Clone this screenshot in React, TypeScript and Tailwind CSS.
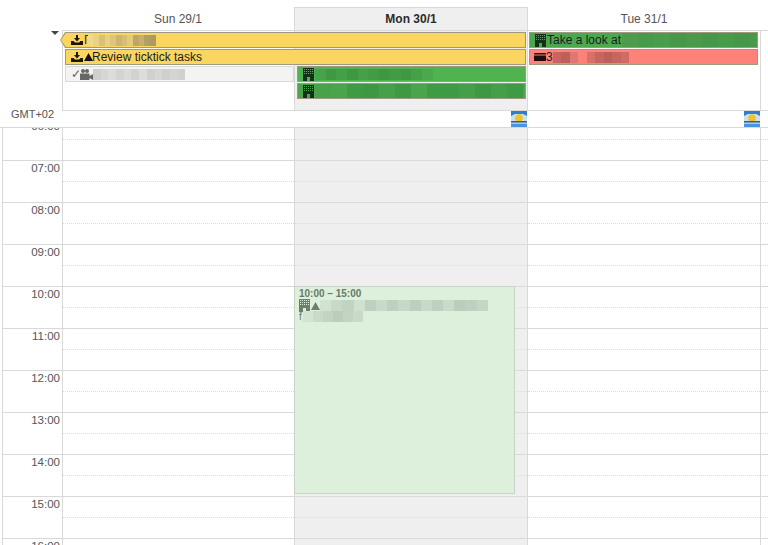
const HOURS = ["06:00", "07:00", "08:00", "09:00", "10:00", "11:00", "12:00", "13:00", "14:00", "15:00", "16:00"];

function TrayIcon() {
  return (
    <svg width="12" height="10" viewBox="0 0 12 10" className="shrink-0" fill="#1c1608">
      <path d="M5 0h2v3h2L6 6.500 3 3h2z" />
      <path d="M0 6h2.500L4 7.500h4L9.500 6H12v4H0z" />
    </svg>
  );
}

function BuildingIcon({ color = "#12301a" }: { color?: string }) {
  return (
    <svg width="11" height="13" viewBox="0 0 11 13" className="shrink-0" fill={color}>
      <path
        d="M0 0h11v9H0zM1 1v1h1V1zm2 0v1h1V1zm2 0v1h1V1zm2 0v1h1V1zm2 0v1h1V1zM1 3v1h1V3zm2 0v1h1V3zm2 0v1h1V3zm2 0v1h1V3zm2 0v1h1V3zM1 5v1h1V5zm2 0v1h1V5zm2 0v1h1V5zm2 0v1h1V5zm2 0v1h1V5z"
        fillRule="evenodd"
      />
      <path d="M0 7h11v2H0zM0 9h4v4H0zM7 9h4v4H7z" />
    </svg>
  );
}

function Triangle({ color = "#111" }: { color?: string }) {
  return (
    <svg width="9" height="8" viewBox="0 0 9 8" className="shrink-0" fill={color}>
      <path d="M4.500 0 9 8H0z" />
    </svg>
  );
}

function CameraIcon() {
  return (
    <svg width="13" height="11" viewBox="0 0 13 11" className="shrink-0" fill="#666">
      <circle cx="3" cy="2" r="2" />
      <circle cx="7" cy="2" r="2" />
      <path d="M0 4.500h9.500V11H0zM9.500 7 13 5v6L9.500 9z" />
    </svg>
  );
}

function CardIcon() {
  return (
    <svg width="12" height="8" viewBox="0 0 12 8" className="shrink-0" fill="#1c0d0d">
      <path d="M1 0h10a1 1 0 0 1 1 1v.5H0V1a1 1 0 0 1 1-1zM0 2.500h12V8H0z" />
    </svg>
  );
}

function SunIcon() {
  return (
    <svg width="16" height="16" viewBox="0 0 16 16" className="shrink-0">
      <rect width="16" height="16" fill="#2f7fd0" />
      <path d="M0 5 4 3h8l4 2v5H0z" fill="#cfe0e6" />
      <circle cx="8" cy="7" r="3.800" fill="#f2c22d" />
      <rect y="10" width="16" height="1.500" fill="#4a5a66" />
      <rect y="11.500" width="16" height="1.500" fill="#a9c8e6" />
      <rect y="13" width="16" height="3" fill="#4e93dd" />
    </svg>
  );
}

// pixelated patch standing in for the censored event titles
function Smear({ colors, cell, className = "" }: { colors: string[]; cell: number; className?: string }) {
  return (
    <span className={`flex h-[11px] shrink-0 ${className}`}>
      {colors.map((c, i) => (
        <span key={i} className="h-full" style={{ width: cell, background: c }} />
      ))}
    </span>
  );
}

function Hour({ day }: { day: "sun" | "mon" | "tue" }) {
  return (
    <div className={`h-[42px] border-b border-[#d9d9d9] ${day === "mon" ? "bg-[#efefef]" : "bg-white"}`}>
      <div className="h-[21px] border-b border-dotted border-[#dcdcdc]" />
    </div>
  );
}

function DayColumn({ day, className = "" }: { day: "sun" | "mon" | "tue"; className?: string }) {
  return (
    <div className={`border-r border-[#d9d9d9] ${className}`}>
      {HOURS.map((h) => (
        <Hour key={h} day={day} />
      ))}
    </div>
  );
}

const BAR = "flex h-[16px] items-center overflow-hidden whitespace-nowrap border border-[#9e9a80] text-[12px] leading-none text-[#1c1c1c]";

export default function App() {
  return (
    <div className="relative h-[545px] w-[768px] overflow-hidden bg-white font-['Liberation_Sans',Arial,sans-serif] text-[#555]">
      {/* day headers */}
      <div className="flex h-[30px] pl-[62px]">
        <div className="flex w-[232px] items-center justify-center pt-[8px] text-[12px]">Sun 29/1</div>
        <div className="mt-[7px] flex h-[23px] w-[234px] items-center justify-center border-x border-t border-[#d9d9d9] bg-[#efefef] text-[12px] font-bold text-[#2b2b2b]">
          Mon 30/1
        </div>
        <div className="flex w-[232px] items-center justify-center pt-[8px] text-[12px]">Tue 31/1</div>
      </div>

      {/* all-day events */}
      <div className="flex h-[80px]">
        <div className="flex w-[62px] justify-end pr-[3px] pt-[1px]">
          <div className="h-0 w-0 border-x-[4px] border-t-[4px] border-x-transparent border-t-[#444]" />
        </div>
        <div className="relative grid w-[699px] grid-cols-[231px_233px_233px] grid-rows-[repeat(4,17px)] content-start border-x border-t border-[#d9d9d9] pt-[1px]">
          <div className="absolute inset-y-0 left-[231px] w-[234px] border-x border-[#d9d9d9] bg-[#efefef]" />
          <div className="relative col-span-2 min-w-0 pl-[2px] pr-[1px]">
            <div className={`${BAR} relative overflow-visible bg-[#fad660] pl-[5px]`}>
              <span className="absolute -left-[6px] top-[-1px] h-0 w-0 border-y-[8px] border-r-[5px] border-y-transparent border-r-[#a8a078]" />
              <span className="absolute -left-[5px] top-0 h-0 w-0 border-y-[7px] border-r-[5px] border-y-transparent border-r-[#fad660]" />
              <TrayIcon />
              <span className="ml-[1px] text-[#333]">Γ</span>
              <Smear cell={5.7} colors={["#f3d98c", "#e9d283", "#d9c278", "#e8d07e", "#dcc57c", "#cdb56f", "#d6bf74", "#e3cb7b", "#bda767", "#c9b06a", "#b1a063", "#ad9a5f"]} className="-ml-[3px]" />
            </div>
          </div>
          <div className="relative min-w-0 pl-[2px] pr-[2px]">
            <div className={`${BAR} border-[#7d9a76] bg-[#4ca84f] pl-[5px]`}>
              <BuildingIcon />
              <span className="ml-[1px]">Take a look at</span>
              <Smear cell={16} colors={["#4c9c4c", "#479a49", "#4a9d4b", "#479849", "#4a9a4a", "#46974a", "#489b4a", "#469749", "#499a4a"]} className="ml-[1px] !h-[14px]" />
            </div>
          </div>

          <div className="relative col-span-2 min-w-0 pl-[2px] pr-[1px]">
            <div className={`${BAR} gap-[1px] bg-[#fad660] pl-[5px]`}>
              <TrayIcon />
              <Triangle />
              <span className="-ml-[2px]">Review ticktick tasks</span>
            </div>
          </div>
          <div className="relative min-w-0 pl-[2px] pr-[2px]">
            <div className={`${BAR} bg-[#ff8278] pl-[4px]`}>
              <CardIcon />
              <span>3</span>
              <Smear cell={8.5} colors={["#c9655f", "#bd5f5a", "#e07770", "#ff8278", "#d87069", "#c76660", "#bb5f5a", "#c76660", "#d06b65"]} />
            </div>
          </div>

          <div className="relative min-w-0 pl-[2px]">
            <div className={`${BAR} border-[#d9d9d9] bg-[#f3f3f3] pl-[5px] text-[#666]`}>
              <span className="w-[9px] text-[12px]">✓</span>
              <CameraIcon />
              <Smear cell={7.7} colors={["#cfcfcf", "#d6d6d6", "#dcdcdc", "#d3d3d3", "#dadada", "#d2d2d2", "#dcdcdc", "#d0d0d0", "#d6d6d6", "#cfcfcf", "#d4d4d4", "#d0d0d0"]} />
            </div>
          </div>
          <div className="relative min-w-0 pl-[3px] pr-[1px]">
            <div className={`${BAR} border-[#8fb08f] bg-[#4fb44f] pl-[5px]`}>
              <BuildingIcon />
              <Smear cell={10.7} colors={["#48a24b", "#3f9944", "#44a048", "#3d9743", "#46a049", "#429c46", "#3d9743", "#429c46", "#3f9944", "#46a049", "#4ba84d"]} className="ml-[1px]" />
            </div>
          </div>
          <div />

          <div />
          <div className="relative min-w-0 pl-[3px] pr-[1px]">
            <div className={`${BAR} border-[#8fb08f] bg-[#4aa64e] pl-[5px]`}>
              <BuildingIcon />
              <Smear cell={16} colors={["#48a24b", "#4aa44c", "#3f9a45", "#3d9743", "#46a049", "#3e9844", "#4aa44c", "#3f9a45", "#3f9a45", "#459f48", "#3d9743", "#459f48", "#3f9a45"]} className="ml-[1px] !h-[14px]" />
            </div>
          </div>
        </div>
        <div className="grow border-t border-[#d9d9d9]" />
      </div>

      {/* timezone row with sun markers */}
      <div className="flex h-[17px]">
        <div className="w-[62px] bg-white pl-[11px] text-[11px] leading-[8px]">GMT+02</div>
        <div className="flex grow border-t border-[#d9d9d9]">
          <div className="flex w-[465px] justify-end">
            <SunIcon />
          </div>
          <div className="flex w-[233px] justify-end">
            <SunIcon />
          </div>
        </div>
      </div>

      {/* hour grid */}
      <div className="relative h-[418px] overflow-hidden border-t border-[#d9d9d9] pl-[2px]">
        <div className="-mt-[9px] flex">
          <div className="w-[61px] border-x border-[#d9d9d9]">
            {HOURS.map((h) => (
              <div key={h} className="h-[42px] border-b border-[#d9d9d9] pr-[2px] pt-[1px] text-right text-[11.500px] leading-[13px]">
                {h}
              </div>
            ))}
          </div>
          <DayColumn day="sun" className="w-[232px]" />
          <DayColumn day="mon" className="w-[233px]" />
          <DayColumn day="tue" className="w-[233px]" />
          <div className="grow">
            {HOURS.map((h) => (
              <Hour key={h} day="tue" />
            ))}
          </div>
        </div>

        {/* timed event */}
        <div className="absolute left-[294px] top-[158px] h-[208px] w-[221px] overflow-hidden border border-[#c6d3c6] bg-[#dcf0dc] pl-[4px] pt-[1px] text-[10px] leading-[11px] text-[#6a7a6a]">
          <div className="font-bold">10:00 – 15:00</div>
          <div className="flex items-center">
            <BuildingIcon color="#6f7f6f" />
            <span className="ml-[1px]">
              <Triangle color="#6f7f6f" />
            </span>
            <Smear cell={11.2} colors={["#d2e3d2", "#c9d9c9", "#c3d3c3", "#d0e1d0", "#c0d0c0", "#cadaca", "#c0d0c0", "#c8d8c8", "#bfcfbf", "#c9d9c9", "#c0d0c0", "#cbdbcb", "#bccdbc", "#c0d0c0", "#c6d6c6"]} />
          </div>
          <div className="-mt-[1px] flex h-[11px] items-center">
            <span>f</span>
            <Smear cell={10} colors={["#d3e4d3", "#cadaca", "#c4d4c4", "#bccdbc", "#c4d4c4", "#cadaca"]} className="ml-[1px]" />
          </div>
        </div>
      </div>
    </div>
  );
}
